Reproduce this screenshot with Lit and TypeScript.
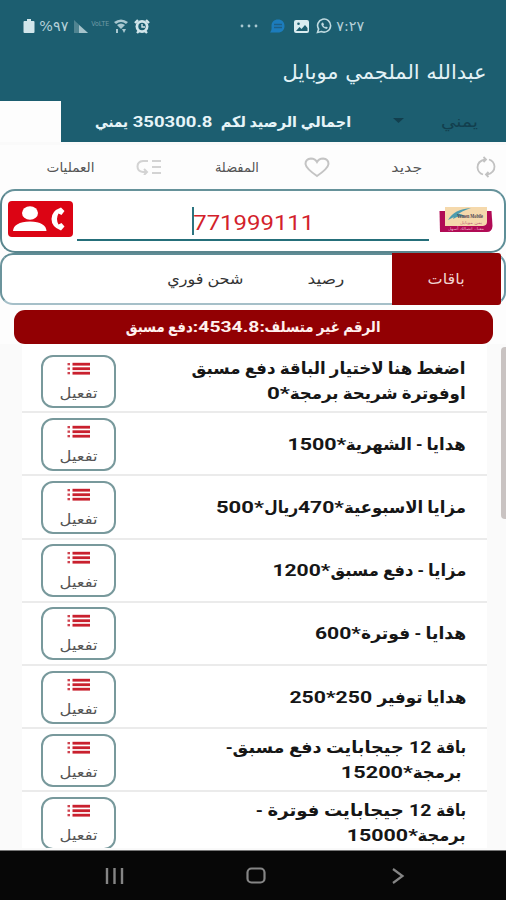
import { LitElement, html, css, svg } from "lit";
import { customElement, property } from "lit/decorators.js";

type Run = [text: string, width: number];

/** A single line of text, scaled horizontally so that it spans a given width. */
@customElement("fit-text")
class FitText extends LitElement {
  @property({ type: Number }) w = 0;
  @property() text = "";

  static styles = css`
    :host { display: block; flex: none; direction: rtl; white-space: pre; }
    .inner { display: inline-block; transform-origin: 100% 50%; }
  `;

  render() {
    return html`<span class="inner">${this.text}</span>`;
  }

  updated() {
    this.style.width = `${this.w}px`;
    const inner = this.renderRoot.querySelector(".inner") as HTMLElement;
    const natural = inner.getBoundingClientRect().width;
    if (natural > 0) inner.style.transform = `scaleX(${this.w / natural})`;
  }
}

const offers: { lines: Run[][] }[] = [
  { lines: [[["اضغط هنا لاختيار الباقة دفع مسبق", 274]], [["اوفوترة شريحة برمجة", 176], ["*0", 23]]] },
  { lines: [[["هدايا - الشهرية", 120], ["*1500", 59]]] },
  { lines: [[["مزايا الاسبوعية", 122], ["*470", 46], ["ريال", 34], ["*500", 48]]] },
  { lines: [[["مزايا - دفع مسبق", 136], ["*1200", 58]]] },
  { lines: [[["هدايا - فوترة", 105], ["*600", 46]]] },
  { lines: [[["هدايا توفير", 89], [" 250*250", 88]]] },
  { lines: [[["باقة", 30], [" 12 ", 32], ["جيجابايت دفع مسبق-", 178]], [[" برمجة", 53], ["*15200", 72]]] },
  { lines: [[["باقة", 30], [" 12 ", 32], ["جيجابايت فوترة -", 148]], [["برمجة", 48], ["*15000", 71]]] },
];

@customElement("app-root")
class AppRoot extends LitElement {
  static styles = css`
    :host {
      display: flex; flex-direction: column; width: 506px; height: 900px; overflow: hidden;
      background: #fdfdfd; direction: ltr;
      font-family: Roboto, "DejaVu Sans", sans-serif; color: #111;
    }
    * { box-sizing: border-box; }
    svg { display: block; flex: none; }
    .teal { background: #1c5e70; flex: none; }
    .status { height: 51px; display: flex; align-items: center; padding: 1px 0 0 23px; color: #b4d0d8; font: 14px "DejaVu Sans", sans-serif; }
    .status .pct { margin-left: 4px; }
    .status .sig { margin-left: 6px; }
    .status .volte { margin: -5px 0 0 2px; font-size: 7px; color: #6f9aa6; }
    .status .wifi { margin-left: 5px; }
    .status .alarm { margin-left: 6px; }
    .status .dots { margin-left: 90px; }
    .status .msg { margin-left: 12px; }
    .status .pic { margin-left: 9px; }
    .status .wa { margin-left: 7px; }
    .status .time { margin-left: 3px; }
    .title { height: 50px; display: flex; align-items: center; justify-content: flex-end; padding: 0 19px 8px 0; font: 20px "DejaVu Sans", sans-serif; color: #e3f2f6; }
    .balance { height: 41px; margin-left: 61px; display: flex; direction: rtl; align-items: center; padding-right: 28px; flex: none; background: #1c5e70; color: #e6f4f8; font-size: 15px; font-weight: bold; }
    .balance .cur { font-weight: normal; color: #123f4e; font-size: 16px; }
    .balance .arrow { margin: 0 37px 2px 42px; }
    .tools { height: 47px; flex: none; display: flex; direction: rtl; align-items: center; padding: 0 9px 0 0; color: #555; font-size: 13.5px; border-top: 3px solid #fafafa; }
    .tools .t1 { margin-right: 53px; }
    .tools .i2 { margin-right: 61px; }
    .tools .t2 { margin-right: 45px; }
    .tools .i3 { margin-right: 53px; }
    .tools .t3 { margin-right: 41px; }
    .phone { height: 64px; flex: none; display: flex; align-items: center; padding: 0 10px 4px 6px; border: 2px solid #66929a; border-color: #66929a #5e8f98 #5a868e #5a868e; border-radius: 15px; background: #fff; }
    .field { margin: 4px 0 0 4px; width: 352px; height: 40px; display: flex; align-items: flex-start; justify-content: center; padding-top: 6px; border-bottom: 2px solid #256f7a; color: #d3212b; font-size: 21px; line-height: 32px; }
    .caret { width: 2px; height: 28px; background: #2c7480; }
    .logo { margin: 0 0 0 10px; }
    .tabs { height: 52px; flex: none; display: flex; direction: rtl; align-items: center; border: 2px solid #96b4bd; border-color: #5f8c95 #6b97a5 #a5bfc8 #6b949c; border-radius: 13px; background: #fff; color: #333; font-size: 15px; padding-right: 3px; }
    .tab { display: flex; justify-content: center; align-items: center; height: 52px; margin: -2px 0; }
    .tab.on { width: 109px; background: #920003; color: #f0d3d0; border-radius: 0 3px 3px 0; }
    .tab.t2 { margin-right: 48px; }
    .tab.t3 { margin-right: 64px; }
    .banner { height: 34px; margin: 5px 13px 0 14px; flex: none; border-radius: 11px; background: #920003; color: #fff0ee; display: flex; direction: rtl; align-items: center; padding: 0 112px 0 0; font-size: 15px; font-weight: bold; }
    .body { flex: 1; min-height: 0; display: flex; background: #fafafa; padding: 0 0 2px 22px; }
    .list { width: 465px; height: 100%; padding-top: 6px; background: #fff; overflow: hidden; }
    .thumb { width: 5px; height: 172px; margin: 3px 0 0 14px; border-radius: 4px 0 0 4px; background: #c9c3c2; }
    .row { height: 63.2px; display: flex; align-items: center; justify-content: space-between; padding: 1px 21px 0 19px; border-bottom: 2px solid #ebebeb; }
    .act { width: 75px; height: 53px; border: 2px solid #78999c; border-radius: 12px; display: flex; flex-direction: column; align-items: center; padding-top: 5px; color: #555; font-size: 14px; line-height: 20px; }
    .act fit-text { margin-top: 8px; }
    .lines { font-size: 16.5px; font-weight: bold; line-height: 25px; color: #161616; }
    .line { display: flex; direction: rtl; }
    .nav { height: 50px; flex: none; background: #070707; border-top: 1px solid #777; display: flex; align-items: center; padding-left: 105px; }
    .nav .home { margin-left: 121px; }
    .nav .back { margin-left: 125px; }
  `;

  private runs(runs: Run[]) {
    return runs.map(([t, w]) => html`<fit-text .text=${t} .w=${w}></fit-text>`);
  }

  private listIcon() {
    return html`<svg width="24" height="13" viewBox="0 0 24 13">
      ${[1, 5.5, 10].map((y) => svg`<rect x="0.5" y=${y} width="2.5" height="2.3" fill="#cf4450"/><rect x="5.5" y=${y - 0.2} width="17.5" height="2.8" fill="#c9202e"/>`)}
    </svg>`;
  }

  render() {
    return html`
      <div class="teal status">
        <svg width="12" height="14" viewBox="0 0 12 14"><path d="M4 0h4v2h2.5q1 0 1 1v10q0 1-1 1h-9q-1 0-1-1V3q0-1 1-1H4z" fill="#d2e6eb"/></svg>
        <fit-text class="pct" .text=${"\u202D%٩٧"} .w=${29}></fit-text>
        <svg class="sig" width="15" height="13" viewBox="0 0 15 13"><path d="M0 0 14 13H0z" fill="#508491"/><path d="M5 5 14 13H5z" fill="#a5c3cb"/></svg>
        <fit-text class="volte" .text=${"VoLTE"} .w=${18}></fit-text>
        <svg class="wifi" width="14" height="15" viewBox="0 0 14 15" fill="#a9c8d0"><path d="M0 3Q7-2 14 3L12 5Q7 1 2 5zM3 6q4-3 8 0L7 10z"/><path d="M2 14V10h2v4zM8 10h4l-2 4z"/></svg>
        <svg class="alarm" width="16" height="15" viewBox="0 0 16 15"><path d="M1 4 4 1M15 4 12 1M3 14l2-2M13 14l-2-2" stroke="#d2e6eb" stroke-width="2.4"/><circle cx="8" cy="7.5" r="6.5" fill="#d2e6eb"/><circle cx="8" cy="7.5" r="3.7" fill="#1c5e70"/><path d="M8 5v3h3" stroke="#d2e6eb" stroke-width="1.4" fill="none"/></svg>
        <svg class="dots" width="18" height="4" viewBox="0 0 18 4" fill="#a9c8d0"><circle cx="2" cy="2" r="1.4"/><circle cx="9" cy="2" r="1.4"/><circle cx="16" cy="2" r="1.4"/></svg>
        <svg class="msg" width="15" height="14" viewBox="0 0 15 14"><path d="M8 .5C12 .5 14.5 3 14.5 7S12 13.5 8 13.5H0Q2 11.500 1.500 7C1.500 3 4 .5 8 .5z" fill="#1c7cbc"/><path d="M4 5.500h8M4 8.500h8" stroke="#1d5f86" stroke-width="1.500"/></svg>
        <svg class="pic" width="15" height="13" viewBox="0 0 15 13"><rect width="15" height="13" rx="2" fill="#d9ebef"/><path d="M2 11 5.500 7l2 2L11 5l2.500 3v3z" fill="#1c5e70"/><circle cx="4.500" cy="3.800" r="1.300" fill="#1c5e70"/></svg>
        <svg class="wa" width="17" height="16" viewBox="0 0 17 16" fill="none"><path d="M1.500 14.500 2.600 11A6.500 6.500 0 1 1 5.500 13.500z" stroke="#c0dae0" stroke-width="1.600"/><path d="M6 4.800 5.200 6Q6 9.800 10.500 11L12 9.800 10 8.500 9 9.200 7.300 7.400 8 6.400 7 4.500z" fill="#c0dae0"/></svg>
        <fit-text class="time" .text=${"\u202D٧:٢٧"} .w=${28}></fit-text>
      </div>
      <div class="teal title"><fit-text .text=${"عبدالله الملجمي موبايل"} .w=${204}></fit-text></div>
      <div class="balance">
        <fit-text class="cur" .text=${"يمني"} .w=${37}></fit-text>
        <svg class="arrow" width="11" height="5" viewBox="0 0 11 5"><path d="M0 0h11L5.500 5z" fill="#123f4e"/></svg>
        ${this.runs([["اجمالي الرصيد لكم ", 134], [" 350300.8 ", 89], ["يمني", 33]])}
      </div>
      <div class="tools">
        <svg width="22" height="22" viewBox="0 0 22 22" fill="none" stroke="#c2c2c2" stroke-width="1.800"><path d="M8 18.500Q3 17 2.500 11.500 2.500 5 10 3.500M14 3.500Q19 5 19.500 10.500 19.500 17 12 18.500"/><path d="M8.500 1 11 3.500 8.500 6M13.500 16 11 18.500 13.500 21"/></svg>
        <fit-text class="t1" .text=${"جديد"} .w=${31}></fit-text>
        <svg class="i2" width="26" height="21" viewBox="0 0 26 21" fill="none" stroke="#c4c4c4" stroke-width="2"><path d="M13 19Q2 11.500 1.500 7 1.500 2 7 1.500 11 1.500 13 5 15 1.500 19 1.500 24.500 2 24.500 7 24 11.500 13 19z"/></svg>
        <fit-text class="t2" .text=${"المفضلة"} .w=${44}></fit-text>
        <svg class="i3" width="26" height="16" viewBox="0 0 26 16" fill="none" stroke="#d3d3d3" stroke-width="2"><path d="M16 2h9M16 8h9M16 14h9M12 2H7Q1.500 2.500 1.500 7.500T7 13h3M8 10l3 3-3 3"/></svg>
        <fit-text class="t3" .text=${"العمليات"} .w=${48}></fit-text>
      </div>
      <div class="phone">
        <svg width="65" height="36" viewBox="0 0 65 36"><rect width="65" height="36" rx="4" fill="#dc0414"/><ellipse cx="22" cy="12" rx="8" ry="6.700" fill="#fff"/><path d="M5 30Q5.500 21 22 20.500 38 21 38.500 30z" fill="#fff"/><path d="M53 6.500Q43.500 10 43.500 18T53 29.500L56.500 25.500 53.500 22 50.500 23.500Q47.500 18 50.500 12.500L53.500 14 56.500 10z" fill="#fff"/></svg>
        <div class="field"><span class="caret"></span><fit-text .text=${"771999111"} .w=${121}></fit-text></div>
        <svg class="logo" width="54" height="27" viewBox="0 0 54 27">
          <path d="M1.500 5H52.500L53.500 20Q53 26 48 26H1L.5 5z" fill="#b10b55"/>
          <path d="M6 1H48V16Q48 19.500 44 20H6z" fill="#f5d9ac"/>
          <path d="M9 14Q15 3 32 2 22 5 17 10zM16 8Q23 7 26 11 20 9 14 13z" fill="#4d9cae"/>
          <text x="18" y="12" font-family="Liberation Serif" font-weight="bold" font-size="5.500" textLength="26" lengthAdjust="spacingAndGlyphs" fill="#4b4550">Yemen Mobile</text>
          <text x="43" y="17.500" direction="rtl" font-family="DejaVu Sans" font-size="4" textLength="22" lengthAdjust="spacingAndGlyphs" fill="#c0607c">يمن موبايل</text>
          <text x="45" y="24" direction="rtl" font-family="DejaVu Sans" font-size="3.800" textLength="36" lengthAdjust="spacingAndGlyphs" fill="#edb0c8">معنا.. اتصالك أسهل</text>
        </svg>
      </div>
      <div class="tabs">
        <div class="tab on"><fit-text .text=${"باقات"} .w=${37}></fit-text></div>
        <div class="tab t2"><fit-text .text=${"رصيد"} .w=${37}></fit-text></div>
        <div class="tab t3"><fit-text .text=${"شحن فوري"} .w=${76}></fit-text></div>
      </div>
      <div class="banner">${this.runs([["الرقم غير متسلف", 116], [":4534.8:", 72], ["دفع مسبق", 67]])}</div>
      <div class="body">
        <div class="list">
          ${offers.map((o) => html`
            <div class="row">
              <div class="act">${this.listIcon()}<fit-text .text=${"تفعيل"} .w=${38}></fit-text></div>
              <div class="lines">${o.lines.map((l) => html`<div class="line">${this.runs(l)}</div>`)}</div>
            </div>`)}
        </div>
        <div class="thumb"></div>
      </div>
      <div class="nav">
        <svg width="20" height="16" viewBox="0 0 20 16" stroke="#858585" stroke-width="2.400"><path d="M2 0v16M9.500 0v16M17 0v16"/></svg>
        <svg class="home" width="20" height="17" viewBox="0 0 20 17" fill="none" stroke="#858585" stroke-width="2.200"><rect x="1.500" y="1.500" width="17" height="14" rx="4"/></svg>
        <svg class="back" width="14" height="16" viewBox="0 0 14 16" fill="none" stroke="#858585" stroke-width="2.200"><path d="M2 1 11.500 8 2 15"/></svg>
      </div>`;
  }
}
